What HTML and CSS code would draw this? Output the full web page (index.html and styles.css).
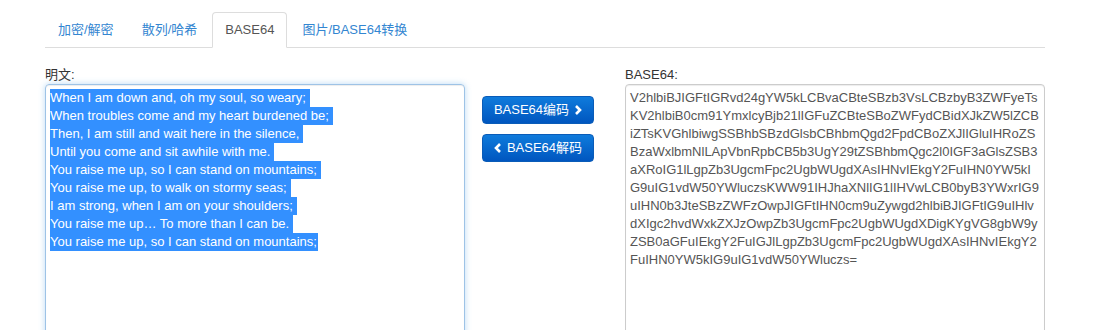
FILE: index.html
```html
<!DOCTYPE html>
<html lang="zh-CN">
<head>
  <meta charset="UTF-8" />
  <title>BASE64</title>
  <link rel="stylesheet" href="styles.css">
</head>
<body>
  <div class="page">
    <ul class="tabs">
      <li><a href="#">加密/解密</a></li>
      <li><a href="#">散列/哈希</a></li>
      <li class="active"><a href="#">BASE64</a></li>
      <li><a href="#">图片/BASE64转换</a></li>
    </ul>

    <div class="panel">
      <div class="col">
        <label for="plain">明文:</label>
        <div id="plain" class="box focus">
          <div class="sel">When I am down and, oh my soul, so weary;</div>
          <div class="sel">When troubles come and my heart burdened be;</div>
          <div class="sel">Then, I am still and wait here in the silence,</div>
          <div class="sel">Until you come and sit awhile with me.</div>
          <div class="sel">You raise me up, so I can stand on mountains;</div>
          <div class="sel">You raise me up, to walk on stormy seas;</div>
          <div class="sel">I am strong, when I am on your shoulders;</div>
          <div class="sel">You raise me up… To more than I can be.</div>
          <div class="sel last">You raise me up, so I can stand on mountains;</div>
        </div>
      </div>

      <div class="actions">
        <button class="btn">BASE64编码
          <svg class="chev" width="8" height="10" viewBox="0 0 8 10"><polyline points="2,1 6,5 2,9" fill="none" stroke="#fff" stroke-width="2.6"/></svg>
        </button>
        <button class="btn">
          <svg class="chev" width="8" height="10" viewBox="0 0 8 10"><polyline points="6,1 2,5 6,9" fill="none" stroke="#fff" stroke-width="2.6"/></svg>
          BASE64解码</button>
      </div>

      <div class="col">
        <label for="encoded">BASE64:</label>
        <textarea id="encoded" class="box" readonly>V2hlbiBJIGFtIGRvd24gYW5kLCBvaCBteSBzb3VsLCBzbyB3ZWFyeTs
KV2hlbiB0cm91YmxlcyBjb21lIGFuZCBteSBoZWFydCBidXJkZW5lZCB
iZTsKVGhlbiwgSSBhbSBzdGlsbCBhbmQgd2FpdCBoZXJlIGluIHRoZS
BzaWxlbmNlLApVbnRpbCB5b3UgY29tZSBhbmQgc2l0IGF3aGlsZSB3
aXRoIG1lLgpZb3UgcmFpc2UgbWUgdXAsIHNvIEkgY2FuIHN0YW5kI
G9uIG1vdW50YWluczsKWW91IHJhaXNlIG1lIHVwLCB0byB3YWxrIG9
uIHN0b3JteSBzZWFzOwpJIGFtIHN0cm9uZywgd2hlbiBJIGFtIG9uIHlv
dXIgc2hvdWxkZXJzOwpZb3UgcmFpc2UgbWUgdXDigKYgVG8gbW9y
ZSB0aGFuIEkgY2FuIGJlLgpZb3UgcmFpc2UgbWUgdXAsIHNvIEkgY2
FuIHN0YW5kIG9uIG1vdW50YWluczs=</textarea>
      </div>
    </div>
  </div>
</body>
</html>
```

FILE: styles.css
```css
body {
  margin: 0;
  padding-top: 12px;
  background: #fff;
  font-family: "Liberation Sans", Arial, "Noto Sans CJK SC", sans-serif;
  font-size: 13px;
  line-height: 18px;
  color: #333;
}

.page {
  width: 1000px;
  margin-left: 45px;
}

.tabs {
  list-style: none;
  margin: 0;
  padding: 0;
  display: flex;
  border-bottom: 1px solid #ddd;
}
.tabs li {
  margin-right: 2px;
  margin-bottom: -1px;
}
.tabs a {
  display: block;
  padding: 8px 12px;
  border: 1px solid transparent;
  border-radius: 4px 4px 0 0;
  color: #3386d1;
  text-decoration: none;
}
.tabs .active a {
  color: #555;
  background: #fff;
  border-color: #ddd #ddd transparent;
}

.panel {
  display: flex;
  margin-top: 18px;
}

.col {
  width: 420px;
}
.col label {
  display: block;
}

.box {
  display: block;
  box-sizing: border-box;
  width: 420px;
  height: 260px;
  margin: 0;
  padding: 4px 4px;
  border: 1px solid #ccc;
  border-radius: 4px;
  box-shadow: inset 0 1px 1px rgba(0, 0, 0, 0.075);
  font: inherit;
  line-height: 18px;
  color: #555;
  resize: none;
  overflow: hidden;
}
.box.focus {
  border-color: #9ec3e6;
  box-shadow: inset 0 1px 1px rgba(0, 0, 0, 0.075), 0 0 6px rgba(102, 175, 233, 0.45);
}

.sel {
  width: fit-content;
  padding-right: 4px;
  background: #3390ff;
  color: #fff;
  white-space: pre;
}
.sel.last {
  padding-right: 1px;
}

.actions {
  width: 160px;
  display: flex;
  flex-direction: column;
  align-items: flex-start;
  gap: 10px;
  padding: 30px 0 0 17px;
  box-sizing: border-box;
}

.btn {
  display: flex;
  align-items: center;
  justify-content: center;
  gap: 5px;
  width: 112px;
  height: 28px;
  padding: 0;
  border: 1px solid #0a5cb8;
  border-radius: 4px;
  background: linear-gradient(#0f7bdc, #0056bf);
  color: #fff;
  font: inherit;
  cursor: pointer;
}
```
